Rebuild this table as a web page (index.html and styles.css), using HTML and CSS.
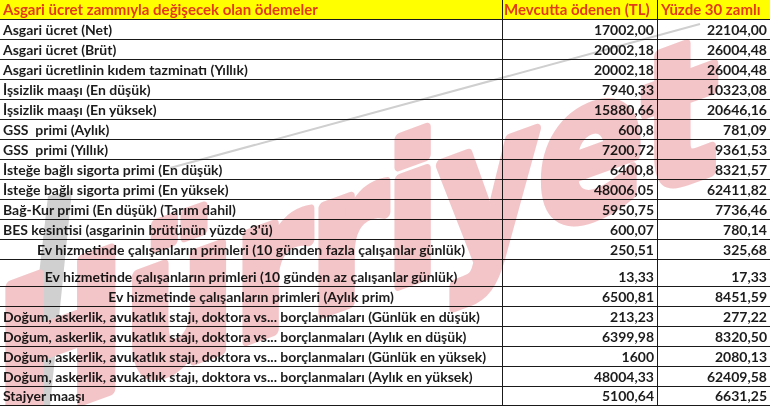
FILE: index.html
```html
<!DOCTYPE html>
<html lang="tr">
<head>
<meta charset="utf-8">
<link rel="stylesheet" href="styles.css">
</head>
<body>
<div class="sheet">
  <div class="row head">
    <div class="cell c1">Asgari ücret zammıyla değişecek olan ödemeler</div>
    <div class="cell c2">Mevcutta ödenen (TL)</div>
    <div class="cell c3">Yüzde 30 zamlı</div>
  </div>
  <div class="row"><div class="cell c1">Asgari ücret (Net)</div><div class="cell num">17002,00</div><div class="cell num c3">22104,00</div></div>
  <div class="row"><div class="cell c1">Asgari ücret (Brüt)</div><div class="cell num">20002,18</div><div class="cell num c3">26004,48</div></div>
  <div class="row"><div class="cell c1">Asgari ücretlinin kıdem tazminatı (Yıllık)</div><div class="cell num">20002,18</div><div class="cell num c3">26004,48</div></div>
  <div class="row"><div class="cell c1">İşsizlik maaşı (En düşük)</div><div class="cell num">7940,33</div><div class="cell num c3">10323,08</div></div>
  <div class="row"><div class="cell c1">İşsizlik maaşı (En yüksek)</div><div class="cell num">15880,66</div><div class="cell num c3">20646,16</div></div>
  <div class="row"><div class="cell c1">GSS&nbsp; primi (Aylık)</div><div class="cell num">600,8</div><div class="cell num c3">781,09</div></div>
  <div class="row"><div class="cell c1">GSS&nbsp; primi (Yıllık)</div><div class="cell num">7200,72</div><div class="cell num c3">9361,53</div></div>
  <div class="row"><div class="cell c1">İsteğe bağlı sigorta primi (En düşük)</div><div class="cell num">6400,8</div><div class="cell num c3">8321,57</div></div>
  <div class="row"><div class="cell c1">İsteğe bağlı sigorta primi (En yüksek)</div><div class="cell num">48006,05</div><div class="cell num c3">62411,82</div></div>
  <div class="row"><div class="cell c1">Bağ-Kur primi (En düşük) (Tarım dahil)</div><div class="cell num">5950,75</div><div class="cell num c3">7736,46</div></div>
  <div class="row"><div class="cell c1">BES kesintisi (asgarinin brütünün yüzde 3'ü)</div><div class="cell num">600,07</div><div class="cell num c3">780,14</div></div>
  <div class="row"><div class="cell c1 center">Ev hizmetinde çalışanların primleri (10 günden fazla çalışanlar günlük)</div><div class="cell num">250,51</div><div class="cell num c3">325,68</div></div>
  <div class="row tall"><div class="cell c1 center">Ev hizmetinde çalışanların primleri (10 günden az çalışanlar günlük)</div><div class="cell num">13,33</div><div class="cell num c3">17,33</div></div>
  <div class="row"><div class="cell c1 center">Ev hizmetinde çalışanların primleri (Aylık prim)</div><div class="cell num">6500,81</div><div class="cell num c3">8451,59</div></div>
  <div class="row"><div class="cell c1">Doğum, askerlik, avukatlık stajı, doktora vs... borçlanmaları (Günlük en düşük)</div><div class="cell num">213,23</div><div class="cell num c3">277,22</div></div>
  <div class="row"><div class="cell c1">Doğum, askerlik, avukatlık stajı, doktora vs... borçlanmaları (Aylık en düşük)</div><div class="cell num">6399,98</div><div class="cell num c3">8320,50</div></div>
  <div class="row"><div class="cell c1">Doğum, askerlik, avukatlık stajı, doktora vs... borçlanmaları (Günlük en yüksek)</div><div class="cell num">1600</div><div class="cell num c3">2080,13</div></div>
  <div class="row"><div class="cell c1">Doğum, askerlik, avukatlık stajı, doktora vs... borçlanmaları (Aylık en yüksek)</div><div class="cell num">48004,33</div><div class="cell num c3">62409,58</div></div>
  <div class="row last"><div class="cell c1">Stajyer maaşı</div><div class="cell num">5100,64</div><div class="cell num c3">6631,25</div></div>

  <svg class="watermark" width="770" height="406" viewBox="0 0 770 406" aria-hidden="true">
    <polygon class="wm-gray" points="48,196 72,190 50,406 24,406"/>
    <g transform="translate(-4 432) rotate(-20) skewX(-20)">
      <text class="wm-text" x="0" y="0">Hürriyet</text>
    </g>
    <line x1="170" y1="168" x2="700" y2="24" class="wm-line"/>
  </svg>
</div>
</body>
</html>
```

FILE: styles.css
```css
html, body {
  margin: 0;
  padding: 0;
  background: #ffffff;
}

.sheet {
  position: relative;
  width: 770px;
  height: 406px;
  overflow: hidden;
  font-family: Lato, "Liberation Sans", sans-serif;
  font-weight: 700;
  font-size: 14px;
  color: #1c1c1c;
}

.row {
  display: grid;
  grid-template-columns: 503px 155px 112px;
  height: 20px;
}

.row.tall {
  height: 27px;
}

.row.last {
  height: 19px;
}

.cell {
  box-sizing: border-box;
  display: flex;
  align-items: flex-end;
  padding: 0 3px 1px 3px;
  border-bottom: 1px solid #1a1a1a;
  border-right: 1px solid #1a1a1a;
  white-space: nowrap;
  overflow: hidden;
}

.cell.c3 {
  border-right: none;
}

.cell.num {
  justify-content: flex-end;
}

.cell.center {
  justify-content: center;
}

.head .cell {
  background: #ffff00;
  color: #e33a1a;
  font-size: 15px;
  padding-left: 3px;
}

.head .c2 {
  padding-left: 1px;
  padding-right: 0;
}

.watermark {
  position: absolute;
  left: 0;
  top: 0;
  mix-blend-mode: multiply;
  pointer-events: none;
}

.wm-text {
  font-family: "DejaVu Sans", sans-serif;
  font-stretch: condensed;
  font-weight: 700;
  font-size: 182px;
  fill: #f3c5c8;
  stroke: #f3c5c8;
  stroke-width: 10;
  stroke-linejoin: round;
}

.wm-gray {
  fill: #d0d0d0;
}

.wm-line {
  stroke: #cfcfcf;
  stroke-width: 2;
}
```
